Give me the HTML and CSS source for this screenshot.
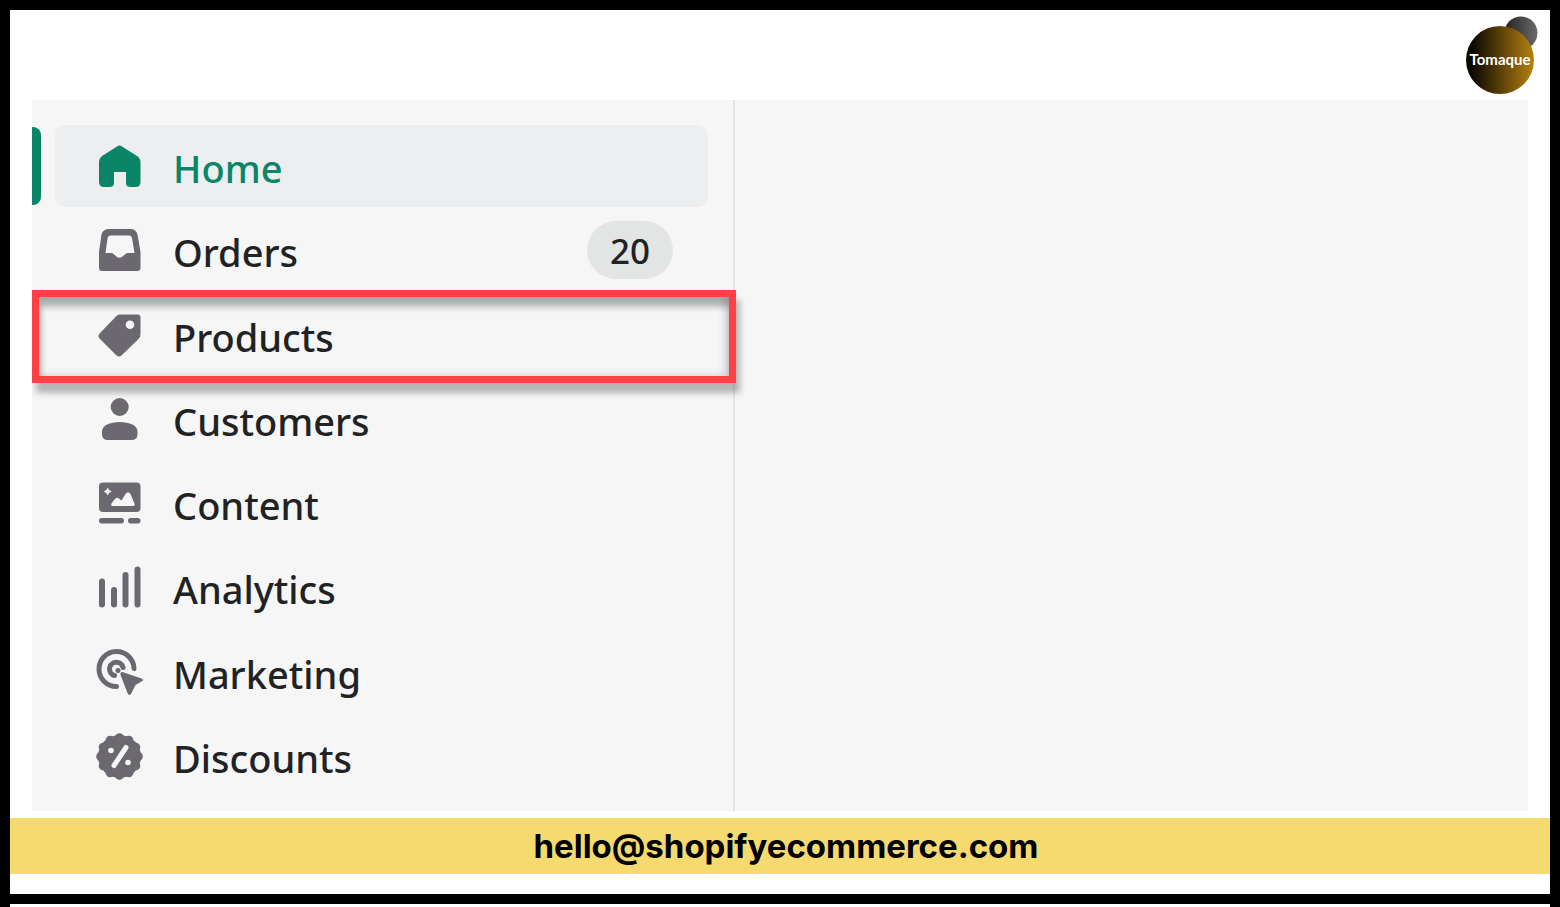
FILE: index.html
```html
<!doctype html>
<html lang="en">
<head>
    <meta charset="UTF-8">
    <meta name="viewport" content="width=device-width, initial-scale=1.0">
    <title>Tomaque</title>
    <link rel="stylesheet" href="styles.css">
</head>
<body>
<div class="page">
    <header class="header">
        <svg class="logo" viewBox="0 0 76 82" role="img" aria-label="Tomaque">
            <defs>
                <linearGradient id="gold">
                    <stop offset="0.1" stop-color="#0d0a02"/>
                    <stop offset="1" stop-color="#b8820f"/>
                </linearGradient>
                <linearGradient id="grey">
                    <stop offset="0" stop-color="#222"/>
                    <stop offset="1" stop-color="#6b6b6b"/>
                </linearGradient>
            </defs>
            <circle cx="57" cy="19" r="16.5" fill="url(#grey)"/>
            <circle cx="36" cy="46" r="34" fill="url(#gold)"/>
            <text class="logo-text" x="36" y="51" text-anchor="middle">Tomaque</text>
        </svg>
    </header>

    <main class="panel">
        <nav class="sidebar">
            <a class="item active" href="#home">
                <svg class="icon" viewBox="0 0 48 48">
                    <path d="M21 4.6Q23.5 2.6 26 4.6L41 14Q44.5 16.5 44.5 20V40Q44.5 45 39.5 45H34.5Q30 45 30 41V30H18V41Q18 45 13.5 45H8Q3 45 3 40V20Q3 16.5 6 14Z"/>
                </svg>
                <span class="label">Home</span>
            </a>
            <a class="item" href="#orders">
                <svg class="icon" viewBox="0 0 48 48">
                    <path fill-rule="evenodd" d="M13 3H34.5Q40 3 41.5 8.5L44.5 26V42Q44.5 45 41.5 45H6Q3 45 3 42V26L5.5 8.5Q7 3 13 3ZM14 9.5Q12 9.5 11.6 12L9.5 27H15Q16.5 27 17.5 28L20.5 30.5Q23.5 33 26.5 30.5L29.5 28Q30.5 27 32 27H38.5L36 12Q35.5 9.5 33.5 9.5Z"/>
                </svg>
                <span class="label">Orders</span>
                <span class="badge">20</span>
            </a>
            <a class="item highlighted" href="#products">
                <svg class="icon" viewBox="0 0 48 48">
                    <path fill-rule="evenodd" d="M23.5 3.5H41.5Q44.5 3.5 44.5 6.5V23Q44.5 26 42.5 28L26 44Q23 47 20 44L4 28Q1 25 4 22L20 5.5Q21.5 3.5 23.5 3.5ZM34 9.5A4.3 4.3 0 1 0 34 18.1A4.3 4.3 0 1 0 34 9.5Z"/>
                </svg>
                <span class="label">Products</span>
            </a>
            <a class="item" href="#customers">
                <svg class="icon" viewBox="0 0 48 48">
                    <circle cx="23.7" cy="12" r="9"/>
                    <path d="M6 36.5C6 30.5 14 27 23.7 27S41.5 30.5 41.5 36.5V39Q41.5 45 35.5 45H12Q6 45 6 39Z"/>
                </svg>
                <span class="label">Customers</span>
            </a>
            <a class="item" href="#content">
                <svg class="icon" viewBox="0 0 48 48">
                    <path fill-rule="evenodd" d="M7 3.5H40.5Q44.5 3.5 44.5 7.5V29Q44.5 33 40.5 33H7Q3 33 3 29V7.5Q3 3.5 7 3.5ZM11.7 8.5L13.2 11L15.7 12.5L13.2 14L11.7 16.5L10.2 14L7.7 12.5L10.2 11ZM16.5 27H37Q39.5 27 38.5 24.5L34.5 15Q32 11.5 29.5 15L25.5 21.5L23 19.5Q20.5 17.5 18.5 20.5L15.5 24.5Q14.5 27 16.5 27Z"/>
                    <rect x="3" y="39" width="25" height="5.5" rx="2.7"/>
                    <rect x="32" y="39" width="12.5" height="5.5" rx="2.7"/>
                </svg>
                <span class="label">Content</span>
            </a>
            <a class="item" href="#analytics">
                <svg class="icon" viewBox="0 0 48 48">
                    <rect x="3" y="15.5" width="6" height="29" rx="3"/>
                    <rect x="15" y="24" width="6" height="20.5" rx="3"/>
                    <rect x="26.5" y="9" width="6" height="35.5" rx="3"/>
                    <rect x="38.5" y="3.5" width="6" height="41" rx="3"/>
                </svg>
                <span class="label">Analytics</span>
            </a>
            <a class="item" href="#marketing">
                <svg class="icon" viewBox="0 0 48 48">
                    <path class="line" d="M38 20.5A17.5 17.5 0 1 0 20.5 38.5M27 19.5A6.8 6.8 0 1 0 18.5 27.5"/>
                    <path d="M26.5 24L45.5 30.5Q48.5 32 45.5 33.5L39.5 37L35.5 45Q33.5 49 31.5 45L24.5 27Q24 23.5 26.5 24Z"/>
                    <circle cx="22" cy="22.5" r="2.5"/>
                </svg>
                <span class="label">Marketing</span>
            </a>
            <a class="item" href="#discounts">
                <svg class="icon" viewBox="0 0 48 48">
                    <circle cx="23.5" cy="24.5" r="21.5"/>
                    <circle class="scallop" cx="23.5" cy="24.5" r="18.8" pathLength="12"/>
                    <path class="slash" d="M30 15.5L18 33.5"/>
                    <circle class="dot" cx="15" cy="18.5" r="2.8"/>
                    <circle class="dot" cx="32" cy="30.5" r="2.8"/>
                </svg>
                <span class="label">Discounts</span>
            </a>
        </nav>
    </main>

    <footer class="footer">
        <a href="mailto:hello@shopifyecommerce.com">hello@shopifyecommerce.com</a>
    </footer>
</div>
</body>
</html>
```
FILE: styles.css
```css
* {
    box-sizing: border-box;
}

body {
    margin: 0;
    padding-bottom: 3px;
    min-height: 100vh;
    display: flex;
    background: #fff;
    border: solid #000;
    border-width: 0 10px;
}

a {
    color: inherit;
    text-decoration: none;
}

.page {
    flex: 1;
    display: flex;
    flex-direction: column;
    border: solid #000;
    border-width: 10px 0;
    padding-bottom: 20px;
}

.header {
    display: flex;
    justify-content: flex-end;
    padding: 4px 10px;
}

.logo {
    width: 76px;
    height: 82px;
}

.logo-text {
    font: 700 15px Lato, sans-serif;
    fill: #fff;
}

.panel {
    flex: 1;
    display: flex;
    margin: 0 22px 7px;
    background: #f6f6f6;
    clip-path: inset(0);
}

.sidebar {
    width: 47%;
    display: flex;
    flex-direction: column;
    justify-content: space-between;
    padding: 25px 25px 14px 23px;
    border-right: 2px solid #e3e5e5;
}

.item {
    position: relative;
    display: flex;
    align-items: center;
    gap: 29px;
    height: 82px;
    padding: 0 35px 0 41px;
    border-radius: 10px;
    color: #202223;
    font: 500 38px/56px "Noto Sans", "Open Sans", sans-serif;

    &.active {
        background: #edeeef;
        color: #0b8568;

        .icon {
            fill: #0b8568;
        }

        &::before {
            content: "";
            position: absolute;
            top: 2px;
            bottom: 2px;
            left: -23px;
            width: 9px;
            border-radius: 0 8px 8px 0;
            background: #0b8568;
        }
    }

    &.highlighted::after {
        content: "";
        position: absolute;
        top: -4px;
        bottom: -7px;
        left: -23px;
        right: -28px;
        border: 7px solid #ff4145;
        box-shadow: 4px 10px 6px #0004, inset 2px 10px 6px #0004, inset -3px 0 8px #0003;
    }
}

.label {
    padding-top: 4px;
}

.icon {
    flex: none;
    width: 48px;
    height: 48px;
    fill: #6b686f;

    .line {
        fill: none;
        stroke: #6b686f;
        stroke-width: 5px;
        stroke-linecap: round;
    }

    .scallop {
        fill: none;
        stroke: #6b686f;
        stroke-width: 9px;
        stroke-linecap: round;
        stroke-dasharray: 0 1;
    }

    .slash {
        stroke: #f6f6f6;
        stroke-width: 5px;
        stroke-linecap: round;
    }

    .dot {
        fill: #f6f6f6;
    }
}

.badge {
    margin-left: auto;
    padding: 2px 23px 0;
    border-radius: 29px;
    background: #e3e5e4;
    font-size: 35px;
    line-height: 56px;
}

.footer {
    padding-left: 12px;
    background: #f5da6f;
    color: #000;
    font: 700 33px/56px Inter, sans-serif;
    text-align: center;
}
```
